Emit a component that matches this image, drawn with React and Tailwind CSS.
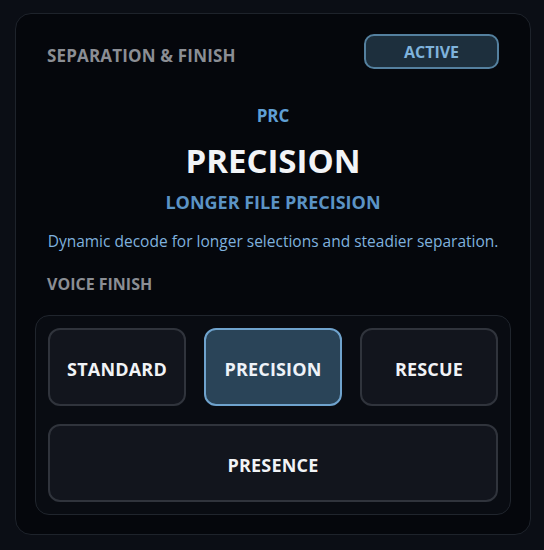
import { useState } from 'react';

const FINISHES = ['STANDARD', 'PRECISION', 'RESCUE'];

const FinishButton = ({ label, active, onClick, wide }) => (
    <button
        onClick={onClick}
        className={`h-[78px] pt-[4px] rounded-[12px] border-2 text-[18px] font-bold tracking-[0.01em] cursor-pointer ${wide ? 'col-span-3' : ''} ${active
            ? 'bg-[#2a4458] border-[#6fa3cd] text-[#eef3f8]'
            : 'bg-[#12151d] border-[#30343c] text-[#f1f3f6]'
            }`}
    >
        {label}
    </button>
);

export default function App() {
    const [finish, setFinish] = useState('PRECISION');

    return (
        <div className="min-h-[550px] w-[544px] bg-[#0b0e15] pt-[13px] pl-[15px] font-['Open_Sans',sans-serif]">
            <div className="w-[516px] h-[522px] rounded-[16px] border border-[#1e232b] bg-[#05070c] px-[19px] pt-[20px]">
                <div className="flex items-center justify-between px-[12px]">
                    <h2 className="mt-[8px] text-[17px] font-bold text-[#8b8e94] tracking-[0.01em]">SEPARATION &amp; FINISH</h2>
                    <span className="w-[135px] h-[35px] rounded-[10px] border-2 border-[#54809f] bg-[#1d2f3d] flex items-center justify-center text-[16px] font-bold text-[#7fb3dc]">
                        ACTIVE
                    </span>
                </div>

                <div className="flex flex-col items-center text-center">
                    <p className="mt-[35px] text-[17px] font-bold leading-[24px] text-[#5f9fd4]">PRC</p>
                    <h1 className="mt-[13px] text-[33px] font-bold leading-[40px] text-[#f2f4f7]">PRECISION</h1>
                    <p className="mt-[8px] text-[18px] font-bold leading-[26px] text-[#5b93c5]">LONGER FILE PRECISION</p>
                    <p className="mt-[15px] text-[15.5px] leading-[22px] text-[#7fb1de]">
                        Dynamic decode for longer selections and steadier separation.
                    </p>
                </div>

                <p className="mt-[22px] px-[12px] text-[16px] font-bold leading-[20px] text-[#8b8e94]">VOICE FINISH</p>

                <div className="mt-[21px] rounded-[14px] border border-[#20252d] bg-[#090c12] p-[12px] grid grid-cols-3 gap-[18px]">
                    {FINISHES.map((f) => (
                        <FinishButton key={f} label={f} active={finish === f} onClick={() => setFinish(f)} />
                    ))}
                    <FinishButton label="PRESENCE" wide active={finish === 'PRESENCE'} onClick={() => setFinish('PRESENCE')} />
                </div>
            </div>
        </div>
    );
}
